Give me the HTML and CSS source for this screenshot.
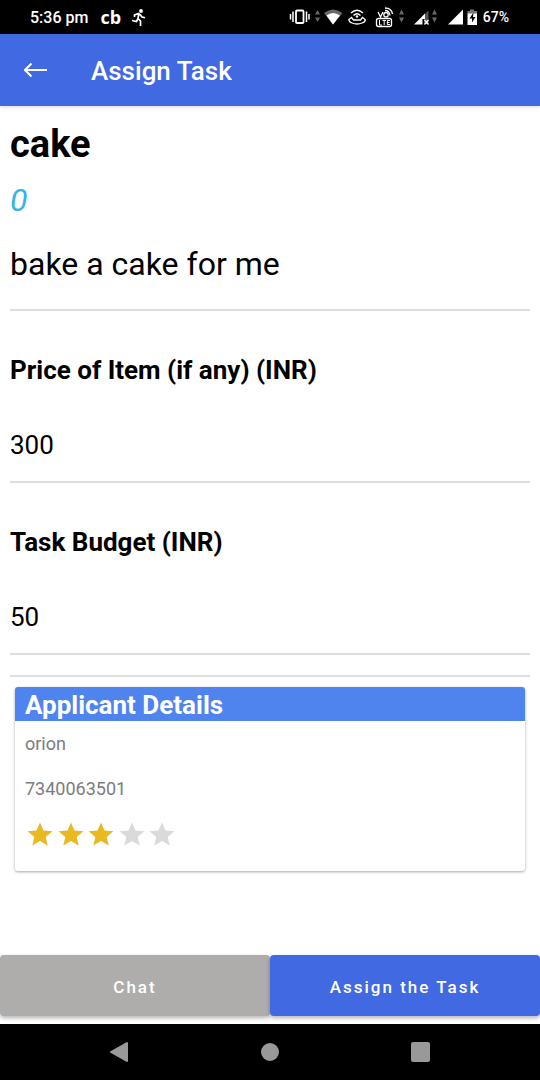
FILE: index.html
```html
<!DOCTYPE html>
<html lang="en">
<head>
<meta charset="utf-8">
<meta name="viewport" content="width=device-width, initial-scale=1">
<title>Assign Task</title>
<link rel="stylesheet" href="styles.css">
</head>
<body>
<div class="screen">
  <div class="status-bar">
    <span class="clock">5:36 pm</span>
    <span class="cb">cb</span>
    <svg class="runner" width="14" height="17" viewBox="0 0 14 17" aria-hidden="true">
      <circle cx="9" cy="2" r="1.900" fill="#fff"/>
      <path d="M2.500 8V6L6.500 4.500L8.500 6L10 8L13 8.800M6.800 5L6 9.500L8.500 12V17M6 9.500L4.500 12.500L0 11.500" fill="none" stroke="#fff" stroke-width="1.700"/>
    </svg>
    <svg class="signals" width="190" height="22" viewBox="288 6 190 22" role="img" aria-label="Vibrate, Wi-Fi, VoLTE, signal, battery charging">
      <g fill="none" stroke="#fff">
        <rect x="296" y="10.500" width="7.500" height="12.500" rx="1" stroke-width="1.800"/>
        <path d="M293 11.500V22M306.500 11.500V22M290.500 14V19.500M309 14V19.500" stroke-width="1.500"/>
      </g>
      <g fill="#686868">
        <path d="M315 14.500L317.500 10L320 14.500zM315 17.500H320L317.500 22z"/>
        <path d="M399 14.500L401.500 9.500L404 14.500zM399 17.500H404L401.500 22.500z"/>
        <path d="M432 14.500L434.500 9.500L437 14.500zM432 17.500H437L434.500 22.500z"/>
        <path d="M324 13Q333 6 342.500 13L333 24.500z"/>
      </g>
      <path d="M326.500 15.500Q333 10.500 340 15.500L333 24.500z" fill="#fff"/>
      <g fill="none" stroke="#fff" stroke-width="1.300">
        <path d="M351 13Q357 7.500 363 13M353.500 15.500Q357 12 360.500 15.500"/>
        <path d="M351.500 17.500L348.800 19.500Q349 22 352 23Q357 25 362 23Q365.500 22 365.200 19.500L362.500 17.500L360.500 20H353.500z"/>
      </g>
      <circle cx="357" cy="16.500" r="1.200" fill="#fff"/>
      <g fill="none" stroke="#fff" stroke-width="1.300">
        <path d="M378 12L380.500 17L383 12"/>
        <circle cx="386" cy="14.700" r="2.200"/>
        <path d="M385 10.500Q389.500 10.500 390 15.500M385 8Q391.500 8 392.500 14"/>
        <rect x="376.500" y="18.500" width="15" height="8" rx="2"/>
        <path d="M379.500 20V25H382M382.500 20.500H386M384.200 20.500V25M390 20.500H387.300V24.500H390M387.300 22.500H389.500" stroke-width="1"/>
      </g>
      <path d="M424 15V24H428.500V10.500z" fill="#555"/>
      <path d="M414 24.500L425 13.500V19H422.500V24.500z" fill="#fff"/>
      <path d="M424.500 20L428.500 24.500M428.500 20L424.500 24.500" stroke="#fff" stroke-width="1.300"/>
      <path d="M448 24.500L463 9.500V24.500z" fill="#fff"/>
      <path d="M470 9.500H474V11H477V14H467.500V11H470z" fill="#777"/>
      <path d="M467.500 13.500H477V25H467.500z" fill="#fff"/>
      <path d="M473.500 12.500L469.500 18.500H472V22.500L475.500 17H473z" fill="#000"/>
    </svg>
    <span class="battery">67%</span>
  </div>

  <header class="app-bar">
    <button class="back" type="button" aria-label="Back">
      <svg width="23" height="16" viewBox="0 0 23 16" aria-hidden="true">
        <path d="M23 7H1M7.500 0.500L1 7L7.500 13.500" fill="none" stroke="#fff" stroke-width="2"/>
      </svg>
    </button>
    <h1 class="app-title">Assign Task</h1>
  </header>

  <main class="content">
    <section class="summary">
      <h2 class="task-name">cake</h2>
      <p class="task-count">0</p>
      <p class="task-text">bake a cake for me</p>
    </section>
    <section class="field">
      <h3 class="label">Price of Item (if any) (INR)</h3>
      <p class="value">300</p>
    </section>
    <section class="field">
      <h3 class="label">Task Budget (INR)</h3>
      <p class="value">50</p>
    </section>
    <hr class="rule">
    <section class="card">
      <h3 class="card-title">Applicant Details</h3>
      <div class="card-body">
        <p class="detail">orion</p>
        <p class="detail">7340063501</p>
        <div class="rating" role="img" aria-label="3 out of 5 stars">
          <svg class="star star-on" viewBox="0 0 26 24"><path d="M13 0.500L16.500 8.500L25.500 9.300L18.700 15L20.700 23.500L13 19L5.300 23.500L7.300 15L0.500 9.300L9.500 8.500z"/></svg>
          <svg class="star star-on" viewBox="0 0 26 24"><path d="M13 0.500L16.500 8.500L25.500 9.300L18.700 15L20.700 23.500L13 19L5.300 23.500L7.300 15L0.500 9.300L9.500 8.500z"/></svg>
          <svg class="star star-on" viewBox="0 0 26 24"><path d="M13 0.500L16.500 8.500L25.500 9.300L18.700 15L20.700 23.500L13 19L5.300 23.500L7.300 15L0.500 9.300L9.500 8.500z"/></svg>
          <svg class="star" viewBox="0 0 26 24"><path d="M13 0.500L16.500 8.500L25.500 9.300L18.700 15L20.700 23.500L13 19L5.300 23.500L7.300 15L0.500 9.300L9.500 8.500z"/></svg>
          <svg class="star" viewBox="0 0 26 24"><path d="M13 0.500L16.500 8.500L25.500 9.300L18.700 15L20.700 23.500L13 19L5.300 23.500L7.300 15L0.500 9.300L9.500 8.500z"/></svg>
        </div>
      </div>
    </section>
  </main>

  <div class="actions">
    <button class="action action-chat" type="button">Chat</button>
    <button class="action action-assign" type="button">Assign the Task</button>
  </div>

  <nav class="system-nav" aria-label="System">
    <button class="nav-button" type="button" aria-label="Back">
      <svg width="20" height="22" viewBox="0 0 20 22"><path d="M18 2V20L2 11z" fill="#999" stroke="#999" stroke-width="2" stroke-linejoin="round"/></svg>
    </button>
    <button class="nav-button" type="button" aria-label="Home">
      <svg width="20" height="20" viewBox="0 0 20 20"><circle cx="10" cy="10" r="9" fill="#999"/></svg>
    </button>
    <button class="nav-button" type="button" aria-label="Recent apps">
      <svg width="20" height="20" viewBox="0 0 20 20"><rect width="19" height="20" rx="2" fill="#999"/></svg>
    </button>
  </nav>
</div>
</body>
</html>
```
FILE: styles.css
```css
* {
  box-sizing: border-box;
}

body,
h1,
h2,
h3,
p {
  margin: 0;
}

body {
  font-family: Roboto, "Liberation Sans", sans-serif;
  color: #000;
  background: #fff;
}

button {
  padding: 0;
  border: 0;
  font-family: inherit;
  cursor: pointer;
}

svg {
  display: block;
}

.screen {
  display: flex;
  flex-direction: column;
  min-height: 100vh;
}

.status-bar {
  display: flex;
  align-items: center;
  height: 34px;
  padding: 0 31px 0 30px;
  color: #fff;
  background: #000;
  font-weight: 500;
}

.clock {
  font-size: 16px;
}

.cb {
  margin-left: 12px;
  font-family: "Open Sans", sans-serif;
  font-size: 18px;
  font-weight: 700;
  line-height: 20px;
}

.runner {
  margin-left: 11px;
}

.signals {
  margin-left: auto;
}

.battery {
  margin-left: 5px;
  font-size: 14px;
}

.app-bar {
  display: flex;
  align-items: center;
  gap: 44px;
  height: 72px;
  padding: 1px 24px 0;
  color: #fff;
  background: #4169e1;
  box-shadow: 0 1px 3px rgba(0, 0, 0, 0.15);
}

.back {
  background: none;
}

.app-title {
  font-size: 26px;
  font-weight: 500;
  line-height: 34px;
}

.content {
  flex: 1;
  padding: 15px 10px 24px;
}

.summary,
.field {
  border-bottom: 2px solid #dedede;
}

.summary {
  padding-bottom: 25px;
}

.task-name {
  font-size: 38px;
  font-weight: 700;
  line-height: 46px;
}

.task-count {
  margin-top: 13px;
  color: #33b5e5;
  font-size: 32px;
  font-style: italic;
  line-height: 40px;
}

.task-text {
  margin-top: 24px;
  font-size: 32px;
  line-height: 40px;
}

.field {
  padding: 43px 0 20px;
}

.label,
.value {
  font-size: 26px;
  line-height: 32px;
}

.label {
  font-weight: 700;
}

.value {
  margin-top: 43px;
}

.rule {
  height: 2px;
  margin: 20px 0 0;
  border: 0;
  background: #dedede;
}

.card {
  margin: 10px 5px 0;
  overflow: hidden;
  border-radius: 3px;
  background: #fff;
  box-shadow: 0 1px 3px rgba(0, 0, 0, 0.35);
}

.card-title {
  padding: 2px 10px 0;
  color: #fff;
  background: #4f83ee;
  font-size: 26px;
  font-weight: 700;
  line-height: 32px;
}

.card-body {
  display: flex;
  flex-direction: column;
  gap: 21px;
  padding: 11px 10px 25px;
}

.detail {
  color: #7c7c7c;
  font-size: 18px;
  line-height: 24px;
}

.rating {
  display: flex;
  justify-content: space-between;
  width: 150px;
  padding-left: 2px;
}

.star {
  width: 26px;
  height: 24px;
  fill: #dadada;
}

.star-on {
  fill: #e8b923;
}

.actions {
  display: flex;
  padding-bottom: 8px;
}

.action {
  flex: 1;
  height: 61px;
  padding-top: 2px;
  border-radius: 4px;
  color: #fff;
  font-size: 17px;
  font-weight: 500;
  letter-spacing: 2px;
  box-shadow: 0 2px 4px rgba(0, 0, 0, 0.3);
}

.action-chat {
  background: #aeadac;
}

.action-assign {
  background: #4169e1;
}

.system-nav {
  display: flex;
  justify-content: center;
  height: 56px;
  background: #000;
}

.nav-button {
  display: flex;
  align-items: center;
  justify-content: center;
  width: 28%;
  background: none;
}
```
